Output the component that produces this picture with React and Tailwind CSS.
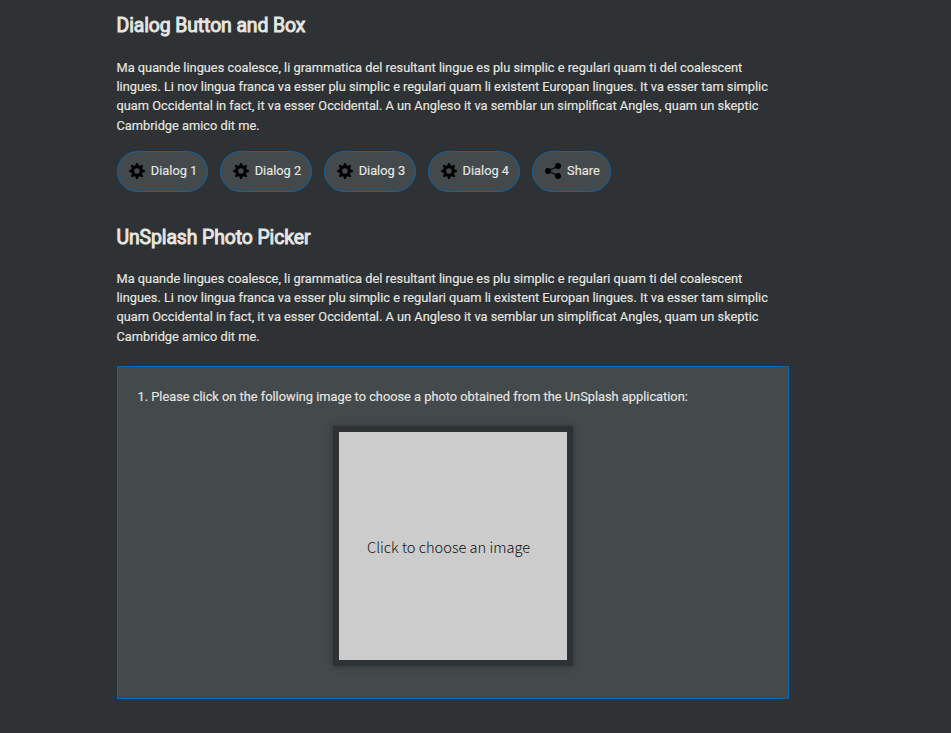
const LOREM = [
  'Ma quande lingues coalesce, li grammatica del resultant lingue es plu simplic e regulari quam ti del coalescent',
  'lingues. Li nov lingua franca va esser plu simplic e regulari quam li existent Europan lingues. It va esser tam simplic',
  'quam Occidental in fact, it va esser Occidental. A un Angleso it va semblar un simplificat Angles, quam un skeptic',
  'Cambridge amico dit me.',
];

function Gear() {
  return (
    <svg viewBox="0 0 16 16" className="mb-px h-4 w-4 shrink-0" fill="none" stroke="#000">
      <circle cx="8" cy="8" r="4.4" strokeWidth="3.2" />
      <g strokeWidth="2.6" strokeLinecap="round">
        <path d="M8 1.3v2M8 12.7v2M1.3 8h2M12.7 8h2M3.2 3.2l1 1M11.8 11.8l1 1M3.2 12.8l1-1M11.8 4.2l1-1" />
      </g>
    </svg>
  );
}

function ShareIcon() {
  return (
    <svg viewBox="0 0 16 16" className="mb-px ml-[0.6px] h-4 w-4 shrink-0">
      <path d="M13 3.2L3 8l10 4.8" fill="none" stroke="#000" strokeWidth="1.1" />
      <circle cx="13" cy="3" r="3" />
      <circle cx="3" cy="8" r="3" />
      <circle cx="13" cy="13" r="3" />
    </svg>
  );
}

function PillButton({ icon, label }) {
  return (
    <button className="flex h-[41px] items-center gap-[6px] rounded-full border border-[#0f64a6] bg-[#44494c] pr-[10.2px] pl-[11.3px] text-[12.8px]">
      {icon}
      <span className="relative -top-px">{label}</span>
    </button>
  );
}

function Intro({ title }) {
  return (
    <>
      <h2 className="text-[19.4px] leading-[30px] font-normal tracking-[-0.1px] whitespace-nowrap [-webkit-text-stroke:0.95px_#e6e6e1]">{title}</h2>
      <p className="h-[77px] text-[12.8px] leading-[19.2px] whitespace-nowrap">
        {LOREM.map((line) => (
          <span key={line} className="block">{line}</span>
        ))}
      </p>
    </>
  );
}

export default function App() {
  return (
    <main className="h-[733px] overflow-hidden bg-[#2e3234] pt-[10.5px] pl-[116.5px] font-['Roboto',sans-serif] text-[#e6e6e1] [-webkit-text-stroke:0.15px]">
      <section className="flex h-[212px] flex-col gap-[17.5px]">
        <Intro title="Dialog Button and Box" />
        <div className="-mt-[1.5px] flex gap-3">
          <PillButton icon={<Gear />} label="Dialog 1" />
          <PillButton icon={<Gear />} label="Dialog 2" />
          <PillButton icon={<Gear />} label="Dialog 3" />
          <PillButton icon={<Gear />} label="Dialog 4" />
          <PillButton icon={<ShareIcon />} label="Share" />
        </div>
      </section>
      <section className="flex flex-col gap-[16.5px]">
        <Intro title="UnSplash Photo Picker" />
        <div className="mt-[3.5px] h-[333px] w-[672px] border border-[#0069b4] bg-[#44494c] pt-5">
          <p className="pl-5 text-[12.8px] leading-5">1. Please click on the following image to choose a photo obtained from the UnSplash application:</p>
          <div className="mt-[19px] ml-[215px] flex h-[240px] w-[240px] items-center justify-center border-6 border-[#2e3234] bg-[#ccc] shadow-[0_0_6px_#2e3234]">
            <span className="mt-[2px] mr-[8px] font-['Noto_Sans_CJK_JP',sans-serif] text-[14.6px] font-light whitespace-nowrap text-[#111] [-webkit-text-stroke:0]">Click to choose an image</span>
          </div>
        </div>
      </section>
    </main>
  );
}
